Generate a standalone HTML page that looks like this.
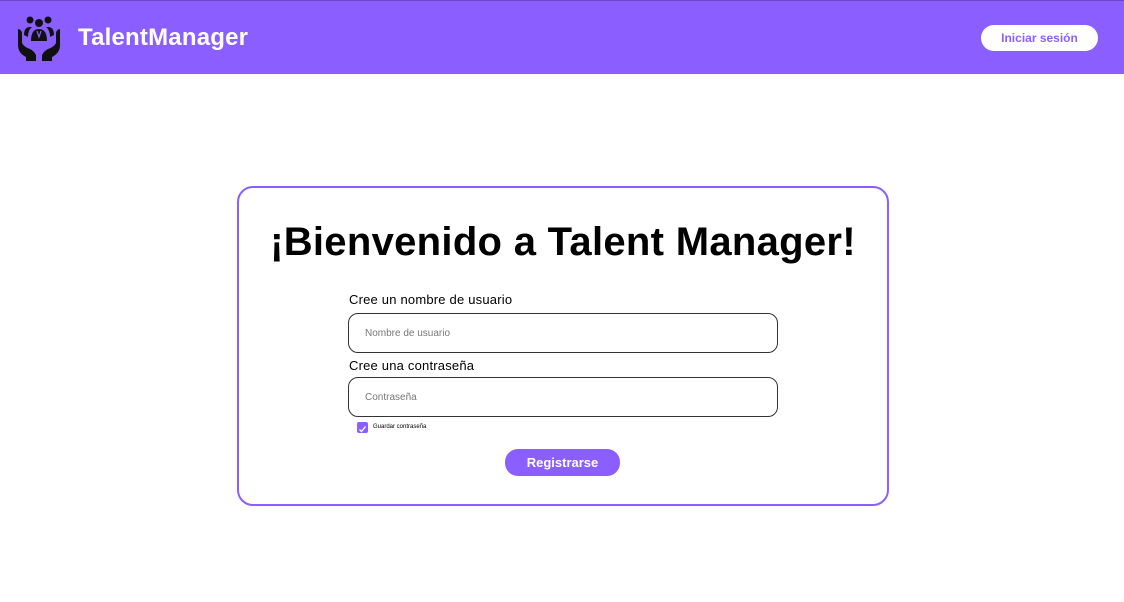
<!DOCTYPE html>
<html><head><meta charset="utf-8"><style>
*{margin:0;padding:0;box-sizing:border-box}
body{width:1124px;height:602px;background:#fff;font-family:"Liberation Sans",sans-serif;position:relative;overflow:hidden}
.hdr{position:absolute;left:0;top:0;width:1124px;height:74px;background:#8b5fff;border-top:1px solid #6a48c8}
.brand{position:absolute;left:78px;top:23px;color:#fff;font-weight:bold;font-size:24px;letter-spacing:0.2px}
.login{position:absolute;left:981px;top:24px;width:117px;height:26px;background:#fff;border-radius:13px;color:#8b5fff;font-weight:bold;font-size:12px;text-align:center;line-height:26px}
.card{position:absolute;left:237px;top:186px;width:652px;height:320px;border:2px solid #8b5fff;border-radius:16px}
h1{position:absolute;left:0;width:100%;top:32px;text-align:center;font-size:40px;font-weight:bold;color:#000;letter-spacing:0.3px}
.lbl{position:absolute;left:349px;font-size:13px;color:#000;letter-spacing:0.2px}
.inp{position:absolute;left:348px;width:430px;height:40px;border:1px solid #333;border-radius:10px;font-size:10px;color:#777;padding-left:16px;line-height:40px}
.cb{position:absolute;left:357px;top:422px;width:11px;height:11px;background:#8b5fff;border-radius:2px}
.cbl{position:absolute;left:373px;top:424px;font-size:6px;color:#000}
.btn{position:absolute;left:505px;top:449px;width:115px;height:27px;background:#8b5fff;border-radius:13px;color:#fff;font-weight:bold;font-size:13px;text-align:center;line-height:27px}
</style></head><body>
<div class="hdr">
<svg style="position:absolute;left:16px;top:14px" width="46" height="46" viewBox="0 0 46 46">
<g fill="#111">
<circle cx="14" cy="5" r="3.5"/><circle cx="32" cy="5" r="3.5"/><circle cx="23" cy="8" r="4"/>
<path d="M8 20 q0-8 6-8 h2 q-4 3-4 10z M38 20 q0-8-6-8 h-2 q4 3 4 10z"/>
<path d="M15 26 q0-12 8-12 q8 0 8 12z" />
<path d="M2 14 q3 0 4 4 l0 10 q2 4 8 6 q4 2 6 6 v6 h-10 v-4 q-8-4-8-12z"/>
<path d="M44 14 q-3 0-4 4 l0 10 q-2 4-8 6 q-4 2-6 6 v6 h10 v-4 q8-4 8-12z"/>
</g>
<path d="M21 16 l2 6 l2-6" stroke="#8b5fff" stroke-width="1.2" fill="none"/>
</svg>
<div class="brand">TalentManager</div>
<div class="login">Iniciar sesión</div>
</div>
<div class="card"><h1>¡Bienvenido a Talent Manager!</h1></div>
<div class="lbl" style="top:292px">Cree un nombre de usuario</div>
<div class="inp" style="top:313px">Nombre de usuario</div>
<div class="lbl" style="top:358px">Cree una contraseña</div>
<div class="inp" style="top:377px">Contraseña</div>
<div class="cb"><svg width="11" height="11" viewBox="0 0 11 11"><path d="M2.5 5.5 l2 2 l4-5" stroke="#fff" stroke-width="1.3" fill="none"/></svg></div>
<div class="cbl">Guardar contraseña</div>
<div class="btn">Registrarse</div>
</body></html>
